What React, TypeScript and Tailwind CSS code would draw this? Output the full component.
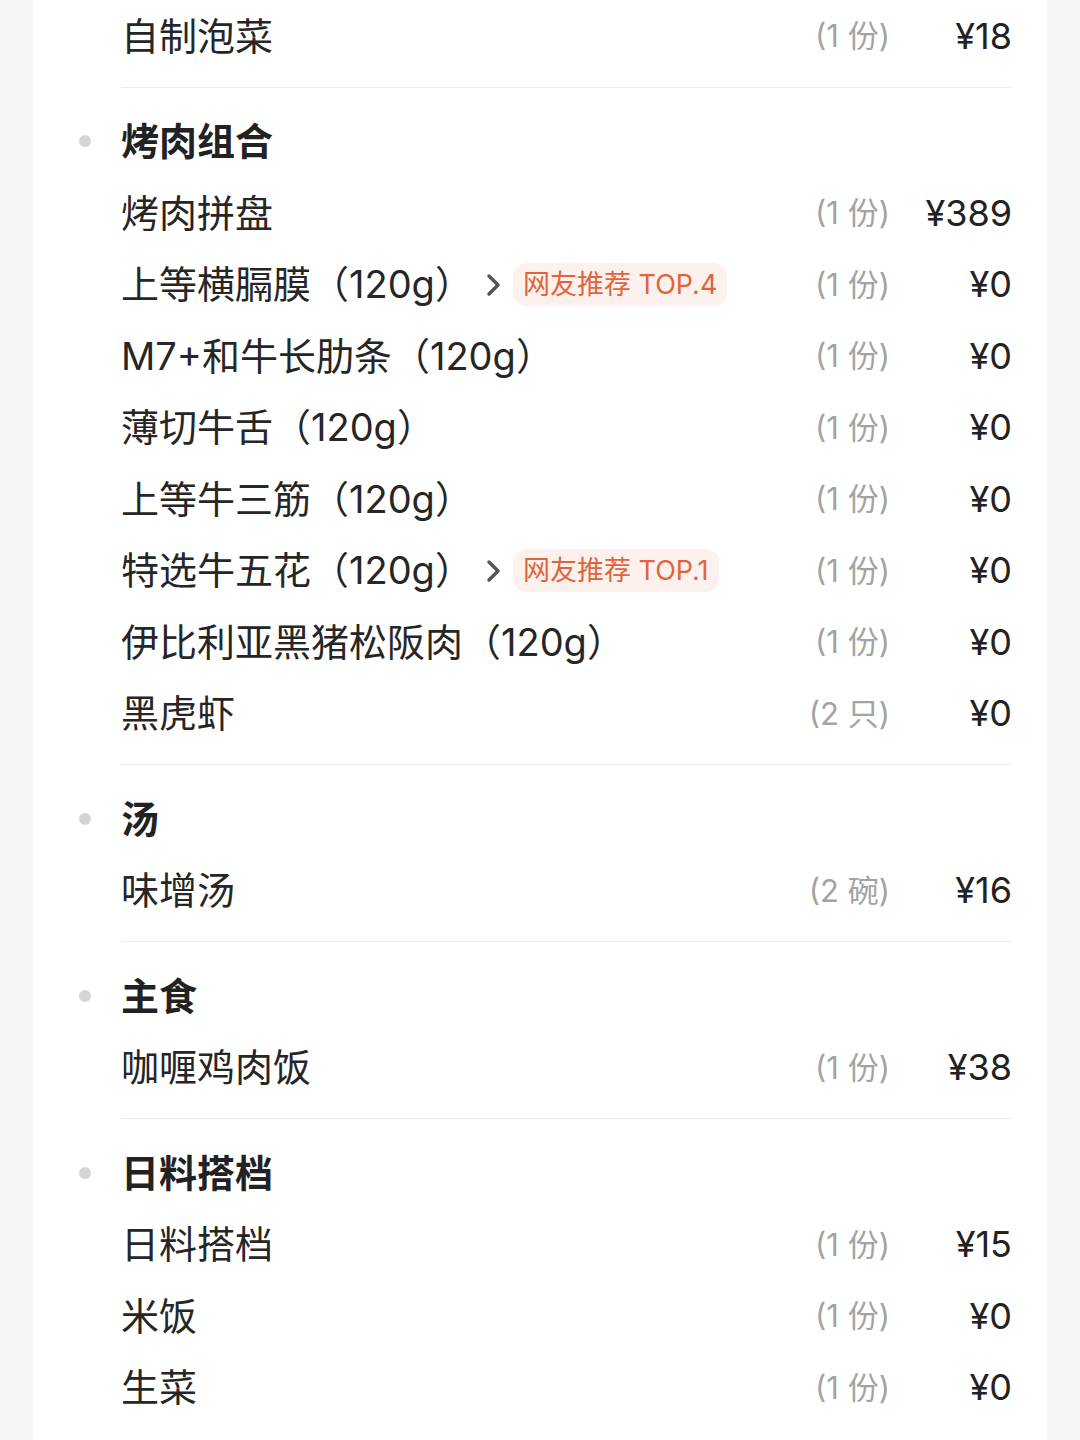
import React from 'react'

type Item = { name: string; qty: string; price: string; tag?: string }
type Section = { title?: string; items: Item[] }

const sections: Section[] = [
  { items: [{ name: '自制泡菜', qty: '(1 份)', price: '¥18' }] },
  {
    title: '烤肉组合',
    items: [
      { name: '烤肉拼盘', qty: '(1 份)', price: '¥389' },
      { name: '上等横膈膜（120g）', qty: '(1 份)', price: '¥0', tag: '网友推荐 TOP.4' },
      { name: 'M7+和牛长肋条（120g）', qty: '(1 份)', price: '¥0' },
      { name: '薄切牛舌（120g）', qty: '(1 份)', price: '¥0' },
      { name: '上等牛三筋（120g）', qty: '(1 份)', price: '¥0' },
      { name: '特选牛五花（120g）', qty: '(1 份)', price: '¥0', tag: '网友推荐 TOP.1' },
      { name: '伊比利亚黑猪松阪肉（120g）', qty: '(1 份)', price: '¥0' },
      { name: '黑虎虾', qty: '(2 只)', price: '¥0' },
    ],
  },
  { title: '汤', items: [{ name: '味增汤', qty: '(2 碗)', price: '¥16' }] },
  { title: '主食', items: [{ name: '咖喱鸡肉饭', qty: '(1 份)', price: '¥38' }] },
  {
    title: '日料搭档',
    items: [
      { name: '日料搭档', qty: '(1 份)', price: '¥15' },
      { name: '米饭', qty: '(1 份)', price: '¥0' },
      { name: '生菜', qty: '(1 份)', price: '¥0' },
    ],
  },
]

function Chevron() {
  return (
    <svg width="18" height="28" viewBox="0 0 18 28" className="block">
      <path d="M4 5 L13 14 L4 23" fill="none" stroke="#555" strokeWidth="3.5" strokeLinecap="round" strokeLinejoin="round" />
    </svg>
  )
}

function Row({ item }: { item: Item }) {
  return (
    <div className="flex h-[71.5px] items-center">
      <div className="flex min-w-0 flex-1 items-center">
        <span className="whitespace-nowrap text-[38px] leading-none text-[#262626]">{item.name}</span>
        {item.tag && (
          <>
            <span className="ml-[12px] mr-[10px] mt-[2px]">
              <Chevron />
            </span>
            <span className="flex h-[43px] items-center whitespace-nowrap rounded-[14px] bg-[#fdf1ed] px-[10px] text-[27px] leading-none text-[#e0643c]">
              {item.tag}
            </span>
          </>
        )}
      </div>
      <span className="whitespace-nowrap text-[31px] leading-none text-[#a3a3a3]">{item.qty}</span>
      <span className="w-[122px] whitespace-nowrap text-right text-[36px] leading-none text-[#222]">{item.price}</span>
    </div>
  )
}

export default function App() {
  return (
    <div
      className="flex h-[1440px] justify-center overflow-hidden bg-[#f6f6f6]"
      style={{ fontFamily: 'Inter, "Noto Sans CJK SC", sans-serif' }}
    >
      <div className="w-[1014px] bg-white pl-[88px] pr-[35px]">
        {sections.map((s, i) => (
          <div key={i}>
            {i > 0 && <div className="h-px bg-[#ebebeb]" />}
            <div className={i > 0 ? 'pt-[18px] pb-[15px]' : 'pb-[15px]'}>
              {s.title && (
                <div className="relative flex h-[71.5px] items-center">
                  <span className="absolute left-[-42px] top-1/2 h-[12px] w-[12px] -translate-y-1/2 rounded-full bg-[#d4d4d4]" />
                  <span className="text-[38px] font-bold leading-none text-[#222]">{s.title}</span>
                </div>
              )}
              {s.items.map((it, j) => (
                <Row key={j} item={it} />
              ))}
            </div>
          </div>
        ))}
      </div>
    </div>
  )
}
